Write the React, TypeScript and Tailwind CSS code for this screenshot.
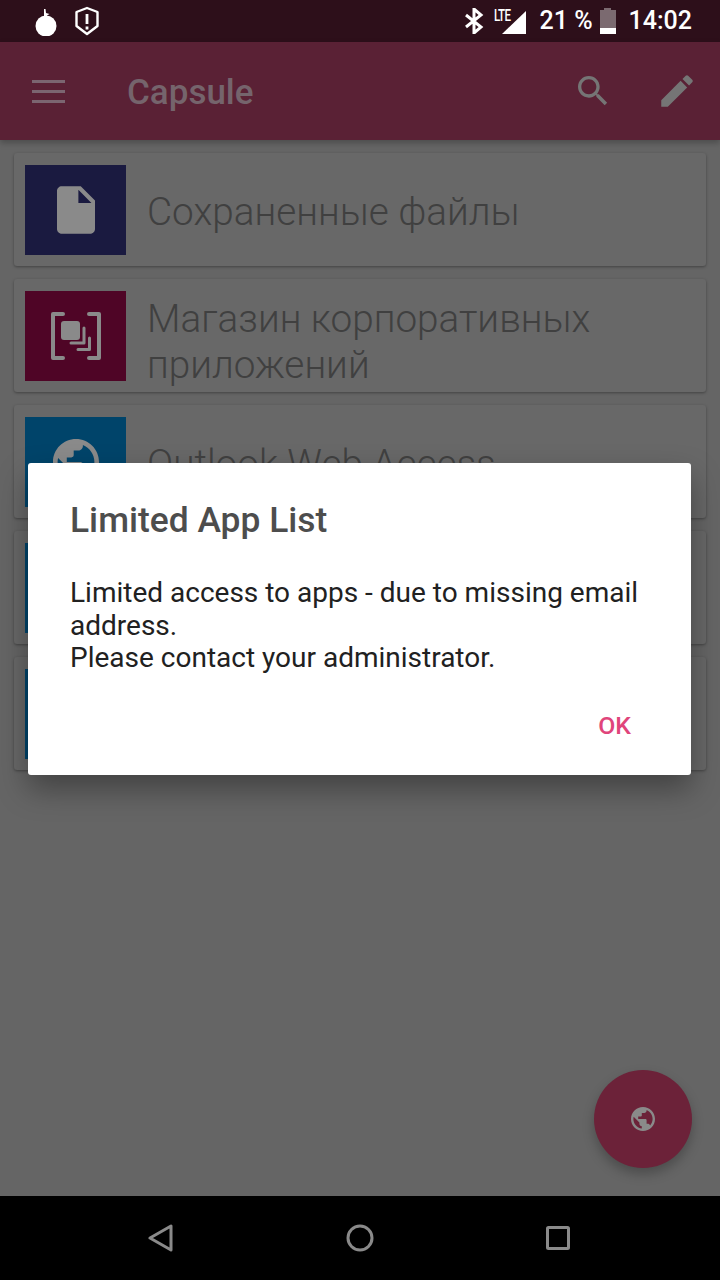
import React from 'react';

const FONT = "font-['Roboto',sans-serif]";

const GLOBE = 'M12 2C6.48 2 2 6.48 2 12s4.48 10 10 10 10-4.48 10-10S17.52 2 12 2zm-1 17.93c-3.95-.49-7-3.85-7-7.93 0-.62.08-1.21.21-1.79L9 15v1c0 1.1.9 2 2 2v1.93zm6.9-2.54c-.26-.81-1-1.39-1.9-1.39h-1v-3c0-.55-.45-1-1-1H8v-2h2c.55 0 1-.45 1-1V7h2c1.1 0 2-.9 2-2v-.41c2.93 1.19 5 4.06 5 7.41 0 2.08-.8 3.97-2.1 5.39z';

const FileIcon = () => (
  <svg width="38" height="48" viewBox="4 2 16 20" fill="#8a8a8a">
    <path d="M14 2H6c-1.1 0-2 .9-2 2v16c0 1.1.9 2 2 2h12c1.1 0 2-.9 2-2V8l-6-6zm-1 7V3.5L18.5 9H13z" />
  </svg>
);

const StoreIcon = () => (
  <svg width="50" height="50" viewBox="0 0 50 50" fill="none" stroke="#8a8a8a" strokeWidth="4" strokeLinejoin="round" strokeLinecap="round">
    <path d="M12 3H2v44h10M38 3h10v44H38" />
    <rect x="10" y="10" width="19" height="19" rx="3" fill="#8a8a8a" stroke="none" />
    <path d="M33 17v15H20" strokeWidth="3" />
    <path d="M38.5 27v11.5H27" strokeWidth="3" />
  </svg>
);

const GlobeIcon = ({ size, color }: { size: number; color: string }) => (
  <svg width={size} height={size} viewBox="2 2 20 20" fill={color}>
    <path d={GLOBE} />
  </svg>
);

const cards = [
  { tile: 'bg-[#1a1a40]', title: 'Сохраненные файлы', pad: 'pt-[5px]', icon: <FileIcon /> },
  { tile: 'bg-[#4f0526]', title: 'Магазин корпоративных приложений', pad: 'pt-[12px]', icon: <StoreIcon /> },
  { tile: 'bg-[#00446a]', title: 'Outlook Web Access', pad: 'pt-[5px]', icon: <GlobeIcon size={46} color="#8a8a8a" /> },
  { tile: 'bg-[#00446a]', title: '', pad: '', icon: null },
  { tile: 'bg-[#00446a]', title: '', pad: '', icon: null },
];

const StatusBar = () => (
  <div className="flex h-[42px] shrink-0 items-center bg-[#2d0f1a] text-white">
    <svg className="ml-[34px]" width="24" height="30" viewBox="0 0 24 30" fill="#fff">
      <circle cx="12" cy="20" r="10.5" />
      <path d="M10 11V3l1.5 0 .5 4 3.5 1-2.5 1.5V11z" />
    </svg>
    <svg className="ml-[16px]" width="26" height="30" viewBox="0 0 26 30" fill="none" stroke="#fff" strokeWidth="2.4">
      <path d="M13 2l10.5 4v14L13 28 2.5 20V6z" strokeLinejoin="round" />
      <path d="M13 8v10M13 20.5v3" strokeWidth="2.8" />
    </svg>
    <div className="ml-auto mr-[28px] flex items-center">
      <svg width="20" height="26" viewBox="0 0 20 26" fill="none" stroke="#fff" strokeWidth="3">
        <path d="M2 7l15 12-7 6V1l7 6L2 19" />
      </svg>
      <div className="relative ml-[10px] h-[26px] w-[32px]">
        <svg className="absolute right-0 top-[3px]" width="24" height="23" viewBox="0 0 24 23" fill="#fff">
          <path d="M24 0v23H0z" />
        </svg>
        <span className={`${FONT} absolute left-0 top-0 text-[16px] font-medium leading-[15px] tracking-[-1px] [transform:scaleX(0.72)] origin-left`}>LTE</span>
      </div>
      <span className={`${FONT} ml-[14px] text-[25px] font-medium leading-[30px]`}>21 %</span>
      <div className="ml-[7px] flex h-[26px] w-[16px] flex-col items-center">
        <div className="h-[2px] w-[7px] bg-[#7b6a70]" />
        <div className="w-full flex-1 bg-[#7b6a70]" />
        <div className="h-[6px] w-full bg-white" />
      </div>
      <span className={`${FONT} ml-[13px] text-[25px] font-medium leading-[30px]`}>14:02</span>
    </div>
  </div>
);

const AppBar = () => (
  <div className="relative z-10 flex h-[98px] shrink-0 items-center bg-[#5a2135] shadow-[0_3px_6px_rgba(0,0,0,0.25)]">
    <div className="ml-[32px] flex w-[33px] flex-col gap-[7px]">
      <div className="h-[3px] bg-[#7b6570]" />
      <div className="h-[3px] bg-[#7b6570]" />
      <div className="h-[3px] bg-[#7b6570]" />
    </div>
    <span className={`${FONT} ml-[62px] pt-[5px] text-[35px] font-medium text-[#75646c]`}>Capsule</span>
    <svg className="ml-auto" width="40" height="40" viewBox="0 0 24 24" fill="#757575">
      <path d="M15.5 14h-.79l-.28-.27C15.41 12.59 16 11.11 16 9.5 16 5.91 13.09 3 9.5 3S3 5.91 3 9.5 5.91 16 9.5 16c1.61 0 3.09-.59 4.23-1.57l.27.28v.79l5 4.99L20.49 19l-4.99-5zm-6 0C7.01 14 5 11.99 5 9.5S7.01 5 9.5 5 14 7.01 14 9.5 11.99 14 9.5 14z" />
    </svg>
    <svg className="ml-[43px] mr-[22px]" width="42" height="42" viewBox="0 0 24 24" fill="#757575">
      <path d="M3 17.25V21h3.75L17.81 9.94l-3.75-3.75L3 17.25zM20.71 7.04c.39-.39.39-1.02 0-1.41l-2.34-2.34c-.39-.39-1.02-.39-1.41 0l-1.83 1.83 3.75 3.75 1.83-1.83z" />
    </svg>
  </div>
);

const NavBar = () => (
  <div className="flex h-[84px] shrink-0 items-center bg-black pl-[148px] pr-[149px]">
    <svg width="26" height="30" viewBox="0 0 26 30" fill="none" stroke="#8a8a8a" strokeWidth="3" strokeLinejoin="round">
      <path d="M23 3v24L2 15z" />
    </svg>
    <svg className="ml-[171px]" width="30" height="30" viewBox="0 0 30 30" fill="none" stroke="#8a8a8a" strokeWidth="3">
      <circle cx="15" cy="15" r="12" />
    </svg>
    <svg className="ml-auto" width="26" height="26" viewBox="0 0 26 26" fill="none" stroke="#8a8a8a" strokeWidth="3" strokeLinejoin="round">
      <rect x="2.5" y="2.5" width="21" height="21" rx="1" />
    </svg>
  </div>
);

export default function App() {
  return (
    <div className={`${FONT} relative flex h-[1280px] w-[720px] flex-col overflow-hidden bg-[#656565]`}>
      <StatusBar />
      <AppBar />

      <div className="flex flex-1 flex-col gap-[13px] px-[14px] pt-[13px]">
        {cards.map((card, i) => (
          <div key={i} className="flex h-[113px] shrink-0 items-center rounded-[3px] bg-[#686868] pl-[11px] shadow-[0_1px_3px_rgba(0,0,0,0.35)]">
            <div className={`flex h-[90px] w-[101px] shrink-0 items-center justify-center ${card.tile}`}>{card.icon}</div>
            <div className={`ml-[21px] w-[520px] text-[38.7px] font-light leading-[46px] text-[#404040] ${card.pad}`}>{card.title}</div>
          </div>
        ))}
      </div>

      <div className="absolute left-[594px] top-[1070px] flex h-[98px] w-[98px] items-center justify-center rounded-full bg-[#6c2239] shadow-[0_6px_12px_rgba(0,0,0,0.25)]">
        <GlobeIcon size={24} color="#8a8a8a" />
      </div>

      <div className="absolute left-[28px] top-[463px] flex h-[312px] w-[663px] flex-col rounded-[3px] bg-white pl-[42px] pr-[50px] shadow-[0_14px_30px_rgba(0,0,0,0.35)]">
        <div className="mt-[35px] text-[35.4px] font-medium leading-[44px] text-[#4d4d4d]">Limited App List</div>
        <div className="mt-[35px] text-[28px] leading-[32.5px] text-[#212121]">
          Limited access to apps - due to missing email address.
          <br />
          Please contact your administrator.
        </div>
        <div className="mt-auto mb-[34px] self-end pr-[10px] text-[24.8px] font-medium leading-[30px] text-[#e0457b]">OK</div>
      </div>

      <NavBar />
    </div>
  );
}
